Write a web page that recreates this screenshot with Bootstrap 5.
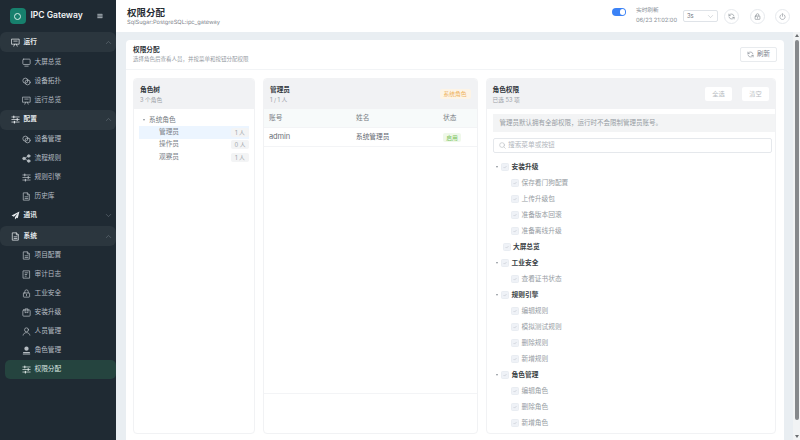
<!DOCTYPE html>
<html lang="zh-CN">
<head>
    <meta charset="UTF-8">
    <meta name="viewport" content="width=device-width, initial-scale=1.0">
    <title>IPC Gateway - 权限分配</title>
    <link href="https://cdn.jsdelivr.net/npm/bootstrap@5.3.0/dist/css/bootstrap.min.css" rel="stylesheet">
    <style>
        html, body { height: 440px; overflow: hidden; }
        body {
            font-family: "Inter", "Noto Sans CJK SC", sans-serif;
            font-size: 6.7px;
            line-height: 1.3;
            color: #5f6670;
            background: #e9eef2;
        }
        svg.ico { width: 9px; height: 9px; fill: none; stroke: currentColor; stroke-width: 1.3; stroke-linecap: round; stroke-linejoin: round; flex: none; }
        svg.solid { fill: currentColor; stroke: none; }

        /* 侧边栏 */
        .side-box { width: 116px; height: 440px; background: #1f2a33; color: #c3cad0; flex: none; }
        .brand-row { height: 32px; padding-left: 9.5px; flex: none; }
        .brand-logo { width: 16px; height: 16px; border-radius: 4px; background: #17806d; }
        .brand-logo i { display: block; width: 7px; height: 7px; border: 1.5px solid #d7efe9; border-radius: 50%; }
        .brand-name { font-size: 8.5px; font-weight: 600; color: #f2f4f6; margin-left: 5px; white-space: nowrap; }
        .menu-toggle { margin-left: 14px; color: #aab2b9; }
        svg.ico.menu-toggle { width: 6px; height: 6px; }
        .group-row { height: 20px; padding: 0 4px 0 11px; gap: 3.5px; color: #e6eaed; font-weight: 700; flex: none; }
        .group-row.opened { background: #2b363e; border-radius: 6px; }
        .group-row .arrow { margin-left: auto; width: 7px; height: 7px; color: #6a757d; }
        .menu-row { height: 19px; padding-left: 22px; gap: 3.5px; color: #b6bdc3; flex: none; }
        .menu-row.current { background: #25443f; color: #dbe6e3; border-radius: 5px; margin: 0 0 0 5px; padding-left: 17px; height: 18.5px; }
        .menu-first { margin-top: .5px; }

        /* 顶栏 */
        .top-box { height: 32px; background: #fff; padding: 0 10px 0 11px; flex: none; }
        .page-title { font-size: 9.5px; font-weight: 700; color: #272c33; line-height: 13px; }
        .page-sub { font-size: 5.7px; color: #7f868e; line-height: 8px; text-rendering: geometricPrecision; }
        .live-switch { width: 14px; height: 7.5px; background: #3b82f6; border-radius: 4px; position: relative; margin-bottom: 8px; }
        .live-switch::after { content: ""; position: absolute; top: 1px; right: 1px; width: 5.5px; height: 5.5px; background: #fff; border-radius: 50%; }
        .live-text { font-size: 5.7px; color: #858c94; line-height: 10px; margin: 0 10px; width: 37px; white-space: nowrap; text-rendering: geometricPrecision; }
        .rate-select { width: 35px; height: 12px; border: 1px solid #dfe3e8; border-radius: 2px; padding: 0 3px; font-size: 5.8px; color: #6d747c; margin-right: 6px; }
        .rate-select svg { width: 7px; height: 7px; color: #a6acb3; stroke-width: 1; }
        .round-btn { width: 15px; height: 15px; border: 1px solid #e6e9ed; border-radius: 50%; color: #7c838b; }
        .round-btn + .round-btn { margin-left: 10.5px; }
        .round-btn svg { width: 7px; height: 7px; }

        /* 内容 */
        .main-wrap { min-width: 0; }
        .content-box { padding: 8px 9px 0 10px; min-width: 0; }
        .outer-card { background: #fff; border-radius: 4px 4px 0 0; height: 400px; }
        .outer-head { height: 30px; padding: 0 7px; border-bottom: 1px solid #f2f4f6; flex: none; }
        .head-title { font-size: 6.7px; font-weight: 700; color: #30353b; line-height: 9px; }
        .head-sub { font-size: 5.5px; color: #959ba3; line-height: 8px; }
        .refresh-btn { width: 37px; height: 15px; border: 1px solid #e8ebee; border-radius: 2px; gap: 3px; font-size: 6.5px; color: #7b828a; }
        .refresh-btn svg { width: 7px; height: 7px; }
        .panel-row { padding: 8px 8px 6px 7px; gap: 8px; height: 370px; flex: none; }
        .panel-box { border: 1px solid #f1f2f4; border-radius: 4px; min-width: 0; overflow: hidden; }
        .panel-left { width: 122px; flex: none; }
        .panel-mid { width: 214.5px; flex: none; }
        .panel-right { flex: 1; }
        .panel-head { height: 30px; background: #f1f2f4; padding: 0 6px; flex: none; }
        .panel-title { font-size: 6.7px; font-weight: 700; color: #33383e; line-height: 10px; }
        .panel-sub { font-size: 5.7px; color: #9a9fa6; line-height: 9px; }

        .role-tree { padding: 5px 5px; }
        .role-top { height: 12.3px; padding-left: 4px; gap: 4px; color: #737a82; }
        .caret-down { width: 0; height: 0; border-left: 1.7px solid transparent; border-right: 1.7px solid transparent; border-top: 2.2px solid #8b9198; flex: none; }
        .role-item { height: 12.3px; padding: 0 0 0 20px; color: #7b8188; }
        .role-item.picked { background: #ecf5ff; }
        .count-tag { margin-left: auto; width: 18px; height: 9px; background: #f3f4f5; border-radius: 2px; font-size: 5.8px; color: #a0a5ab; text-align: center; line-height: 9px; }

        .grid-row { height: 19px; padding-left: 5px; border-bottom: 1px solid #f3f4f6; flex: none; }
        .grid-row.head-line { background: #f7fafa; color: #777e85; }
        .cell-a { width: 87px; }
        .cell-name { font-size: 7.5px; letter-spacing: -.1px; color: #6a7077; }
        .cell-b { width: 87px; }
        .tag-warn { background: #fdf4e6; color: #eeb35f; font-size: 5.8px; border-radius: 2px; width: 31px; height: 10px; line-height: 10px; text-align: center; }
        .tag-ok { display: block; background: #eff8ea; color: #79c257; font-size: 5.8px; border-radius: 2px; width: 18px; height: 9px; line-height: 9px; text-align: center; }
        .grid-foot { margin-top: auto; height: 40px; border-top: 1px solid #f3f4f6; flex: none; }

        .ghost-btn { width: 27px; height: 14px; background: #fff; border-radius: 2px; font-size: 6.2px; color: #b6bbc1; text-align: center; line-height: 14px; margin-left: 10px; }
        .perm-body { padding: 5px 0 0 6px; }
        .perm-note { height: 18px; background: #f3f4f5; font-size: 6.5px; color: #969ca3; padding-left: 7px; margin-bottom: 6px; }
        .perm-search { width: 279px; height: 15px; border: 1px solid #e5e8ec; border-radius: 2px; padding: 0 5px; gap: 2.5px; color: #b3b8be; margin-bottom: 6px; }
        .perm-search svg { width: 7px; height: 7px; }
        .perm-search input { border: 0; outline: 0; padding: 0; width: 200px; font-size: 6.7px; background: none; }
        .perm-search input::placeholder { color: #b3b8be; }
        .perm-line { height: 16px; color: #969ca3; gap: 3px; padding-left: 18px; }
        .perm-line.top-level { color: #3a3f45; font-weight: 700; padding-left: 10px; gap: 2.5px; }
        .perm-line .caret-down { margin-left: -7px; margin-right: 1.1px; }
        .perm-line input.form-check-input {
            width: 8px; height: 8px; margin: 0; flex: none; opacity: 1;
            border: 1px solid #e9edf2; border-radius: 1.5px; background-color: #eff2f7;
            background-image: url("data:image/svg+xml,%3csvg xmlns='http://www.w3.org/2000/svg' viewBox='0 0 20 20'%3e%3cpath fill='none' stroke='%23bfc5cc' stroke-width='2' d='M5 10l3.500 3.500L15 7'/%3e%3c/svg%3e");
        }

        /* 滚动条 */
        .scroll-col { width: 7px; background: #f1f3f4; flex: none; }
        .scroll-thumb { width: 4px; height: 380px; background: #85888b; border-radius: 2px; margin: 3px auto 0; }
        .scroll-arrow { width: 0; height: 0; margin: 0 auto; border-left: 2.5px solid transparent; border-right: 2.5px solid transparent; }
        .scroll-arrow.up { border-bottom: 3px solid #6a6d70; margin-top: 2px; }
        .scroll-arrow.down { border-top: 3px solid #6a6d70; margin-top: auto; margin-bottom: 2px; }
    </style>
</head>
<body class="d-flex">
    <svg width="0" height="0" class="position-absolute">
        <symbol id="i-monitor" viewBox="0 0 16 16"><rect x="1.5" y="2" width="13" height="9.5" rx="1.5"/><path d="M5 14.5h6"/></symbol>
        <symbol id="i-link" viewBox="0 0 16 16"><circle cx="6" cy="6.5" r="4.5"/><circle cx="10" cy="9.5" r="4.5"/></symbol>
        <symbol id="i-board" viewBox="0 0 16 16"><path d="M1.5 2h13v9h-13zM5 5.500h6M5 14.500l1.500-3.500M11 14.500 9.500 11"/></symbol>
        <symbol id="i-sliders" viewBox="0 0 16 16"><path d="M1.500 3.500h13M1.500 8h13M1.500 12.500h13"/><path d="M5 2v3M11 6.500v3M6 11v3" stroke-width="2"/></symbol>
        <symbol id="i-share" viewBox="0 0 16 16"><circle cx="12" cy="3.500" r="2.300" fill="currentColor"/><circle cx="3.500" cy="8" r="2.300" fill="currentColor"/><circle cx="12" cy="12.500" r="2.300" fill="currentColor"/><path d="M12 3.500 3.500 8l8.500 4.500"/></symbol>
        <symbol id="i-doc" viewBox="0 0 16 16"><path d="M3 1.500h6.500l3.500 3.500v9.500H3zM9.500 1.500V5H13M5.500 8.500h5M5.500 11.500h5"/></symbol>
        <symbol id="i-log" viewBox="0 0 16 16"><path d="M2.500 1.500h11v13h-11zM5.500 5h5M5.500 8h3M5.500 11h2"/></symbol>
        <symbol id="i-lock" viewBox="0 0 16 16"><rect x="2.500" y="7" width="11" height="7.500" rx="1"/><path d="M5 7V4.500a3 3 0 0 1 6 0V7M8 9.500v2.500"/></symbol>
        <symbol id="i-box" viewBox="0 0 16 16"><rect x="1.500" y="3.500" width="13" height="11" rx="1.500"/><path d="M5.500 3.500V1.500h5v2M5.500 3.500v5l2.500-1 2.500 1v-5"/></symbol>
        <symbol id="i-user" viewBox="0 0 16 16"><circle cx="8" cy="5" r="3.500"/><path d="M2 14.500c.5-3 3-4.500 6-4.500s5.500 1.500 6 4.500"/></symbol>
        <symbol id="i-userfill" viewBox="0 0 16 16"><circle cx="8" cy="4.800" r="3.800"/><path d="M2 10.500h12v2H2zM1.500 13.500h13v1.500h-13z"/></symbol>
        <symbol id="i-send" viewBox="0 0 16 16"><path d="M15 1 1 8l4 2 7-6-5 7v4l3-3 2 1z"/></symbol>
        <symbol id="i-refresh" viewBox="0 0 16 16"><path d="M13.500 6.500A5.700 5.700 0 0 0 3.500 4.500L2 6M2.500 9.500a5.700 5.700 0 0 0 10 2L14 10"/><path d="M2 2.500V6h3.500M14 13.500V10h-3.500"/></symbol>
        <symbol id="i-power" viewBox="0 0 16 16"><path d="M5 3.500a6 6 0 1 0 6 0M8 1.500v6"/></symbol>
        <symbol id="i-search" viewBox="0 0 16 16"><circle cx="7" cy="7" r="5.500"/><path d="m11.500 11.500 3 3"/></symbol>
        <symbol id="i-up" viewBox="0 0 16 16"><path d="m3 10.500 5-5 5 5"/></symbol>
        <symbol id="i-down" viewBox="0 0 16 16"><path d="m3 5.500 5 5 5-5"/></symbol>
        <symbol id="i-menu" viewBox="0 0 16 16"><path d="M2 3h12v10H2z" fill="currentColor"/><path d="M2 6h12M2 9.500h12" stroke="#1f2a33"/></symbol>
    </svg>

    <!-- 侧边栏 -->
    <aside class="side-box d-flex flex-column">
        <div class="brand-row d-flex align-items-center">
            <div class="brand-logo d-flex align-items-center justify-content-center"><i></i></div>
            <span class="brand-name">IPC Gateway</span>
            <svg class="ico menu-toggle"><use href="#i-menu"/></svg>
        </div>
        <div class="group-row opened d-flex align-items-center"><svg class="ico"><use href="#i-board"/></svg>运行<svg class="ico arrow"><use href="#i-up"/></svg></div>
        <div class="menu-row menu-first d-flex align-items-center"><svg class="ico"><use href="#i-monitor"/></svg>大屏总览</div>
        <div class="menu-row d-flex align-items-center"><svg class="ico"><use href="#i-link"/></svg>设备拓扑</div>
        <div class="menu-row d-flex align-items-center"><svg class="ico"><use href="#i-board"/></svg>运行总览</div>
        <div class="group-row opened d-flex align-items-center"><svg class="ico"><use href="#i-sliders"/></svg>配置<svg class="ico arrow"><use href="#i-up"/></svg></div>
        <div class="menu-row d-flex align-items-center"><svg class="ico"><use href="#i-link"/></svg>设备管理</div>
        <div class="menu-row d-flex align-items-center"><svg class="ico"><use href="#i-share"/></svg>流程规则</div>
        <div class="menu-row d-flex align-items-center"><svg class="ico"><use href="#i-sliders"/></svg>规则引擎</div>
        <div class="menu-row d-flex align-items-center"><svg class="ico"><use href="#i-doc"/></svg>历史库</div>
        <div class="group-row d-flex align-items-center"><svg class="ico solid"><use href="#i-send"/></svg>通讯<svg class="ico arrow"><use href="#i-down"/></svg></div>
        <div class="group-row opened menu-first d-flex align-items-center"><svg class="ico"><use href="#i-doc"/></svg>系统<svg class="ico arrow"><use href="#i-up"/></svg></div>
        <div class="menu-row d-flex align-items-center"><svg class="ico"><use href="#i-doc"/></svg>项目配置</div>
        <div class="menu-row d-flex align-items-center"><svg class="ico"><use href="#i-log"/></svg>审计日志</div>
        <div class="menu-row d-flex align-items-center"><svg class="ico"><use href="#i-lock"/></svg>工业安全</div>
        <div class="menu-row d-flex align-items-center"><svg class="ico"><use href="#i-box"/></svg>安装升级</div>
        <div class="menu-row d-flex align-items-center"><svg class="ico"><use href="#i-user"/></svg>人员管理</div>
        <div class="menu-row d-flex align-items-center"><svg class="ico solid"><use href="#i-userfill"/></svg>角色管理</div>
        <div class="menu-row current d-flex align-items-center"><svg class="ico"><use href="#i-sliders"/></svg>权限分配</div>
    </aside>

    <div class="main-wrap flex-grow-1 d-flex flex-column">
        <!-- 顶栏 -->
        <header class="top-box d-flex align-items-center">
            <div class="me-auto">
                <div class="page-title">权限分配</div>
                <div class="page-sub">SqlSugar:PostgreSQL:ipc_gateway</div>
            </div>
            <div class="live-switch"></div>
            <div class="live-text"><div>实时刷新</div><div>06/23 21:02:00</div></div>
            <div class="rate-select d-flex align-items-center justify-content-between">3s<svg class="ico"><use href="#i-down"/></svg></div>
            <div class="round-btn d-flex align-items-center justify-content-center"><svg class="ico"><use href="#i-refresh"/></svg></div>
            <div class="round-btn d-flex align-items-center justify-content-center"><svg class="ico"><use href="#i-lock"/></svg></div>
            <div class="round-btn d-flex align-items-center justify-content-center"><svg class="ico"><use href="#i-power"/></svg></div>
        </header>

        <div class="flex-grow-1 d-flex">
            <main class="content-box flex-grow-1">
                <div class="outer-card d-flex flex-column">
                    <div class="outer-head d-flex align-items-center justify-content-between">
                        <div>
                            <div class="head-title">权限分配</div>
                            <div class="head-sub">选择角色后查看人员，并按菜单和按钮分配权限</div>
                        </div>
                        <div class="refresh-btn d-flex align-items-center justify-content-center"><svg class="ico"><use href="#i-refresh"/></svg>刷新</div>
                    </div>
                    <div class="panel-row d-flex">
                        <!-- 角色树 -->
                        <section class="panel-box panel-left d-flex flex-column">
                            <div class="panel-head d-flex flex-column justify-content-center">
                                <div class="panel-title">角色树</div>
                                <div class="panel-sub">3 个角色</div>
                            </div>
                            <div class="role-tree">
                                <div class="role-top d-flex align-items-center"><span class="caret-down"></span>系统角色</div>
                                <div class="role-item picked d-flex align-items-center">管理员<span class="count-tag">1 人</span></div>
                                <div class="role-item d-flex align-items-center">操作员<span class="count-tag">0 人</span></div>
                                <div class="role-item d-flex align-items-center">观察员<span class="count-tag">1 人</span></div>
                            </div>
                        </section>
                        <!-- 人员 -->
                        <section class="panel-box panel-mid d-flex flex-column">
                            <div class="panel-head d-flex align-items-center justify-content-between">
                                <div>
                                    <div class="panel-title">管理员</div>
                                    <div class="panel-sub">1 / 1 人</div>
                                </div>
                                <span class="tag-warn">系统角色</span>
                            </div>
                            <div class="grid-row head-line d-flex align-items-center"><div class="cell-a">账号</div><div class="cell-b">姓名</div><div>状态</div></div>
                            <div class="grid-row d-flex align-items-center"><div class="cell-a cell-name">admin</div><div class="cell-b">系统管理员</div><div><span class="tag-ok">启用</span></div></div>
                            <div class="grid-foot"></div>
                        </section>
                        <!-- 权限 -->
                        <section class="panel-box panel-right d-flex flex-column">
                            <div class="panel-head d-flex align-items-center justify-content-between">
                                <div>
                                    <div class="panel-title">角色权限</div>
                                    <div class="panel-sub">已选 53 项</div>
                                </div>
                                <div class="d-flex"><span class="ghost-btn">全选</span><span class="ghost-btn">清空</span></div>
                            </div>
                            <div class="perm-body">
                                <div class="perm-note d-flex align-items-center">管理员默认拥有全部权限，运行时不会限制管理员账号。</div>
                                <div class="perm-search d-flex align-items-center"><svg class="ico"><use href="#i-search"/></svg><input type="text" placeholder="搜索菜单或按钮"></div>
                                <div class="perm-line top-level d-flex align-items-center"><span class="caret-down"></span><input class="form-check-input" type="checkbox" checked disabled>安装升级</div>
                                <div class="perm-line d-flex align-items-center"><input class="form-check-input" type="checkbox" checked disabled>保存看门狗配置</div>
                                <div class="perm-line d-flex align-items-center"><input class="form-check-input" type="checkbox" checked disabled>上传升级包</div>
                                <div class="perm-line d-flex align-items-center"><input class="form-check-input" type="checkbox" checked disabled>准备版本回滚</div>
                                <div class="perm-line d-flex align-items-center"><input class="form-check-input" type="checkbox" checked disabled>准备离线升级</div>
                                <div class="perm-line top-level d-flex align-items-center"><input class="form-check-input" type="checkbox" checked disabled>大屏总览</div>
                                <div class="perm-line top-level d-flex align-items-center"><span class="caret-down"></span><input class="form-check-input" type="checkbox" checked disabled>工业安全</div>
                                <div class="perm-line d-flex align-items-center"><input class="form-check-input" type="checkbox" checked disabled>查看证书状态</div>
                                <div class="perm-line top-level d-flex align-items-center"><span class="caret-down"></span><input class="form-check-input" type="checkbox" checked disabled>规则引擎</div>
                                <div class="perm-line d-flex align-items-center"><input class="form-check-input" type="checkbox" checked disabled>编辑规则</div>
                                <div class="perm-line d-flex align-items-center"><input class="form-check-input" type="checkbox" checked disabled>模拟测试规则</div>
                                <div class="perm-line d-flex align-items-center"><input class="form-check-input" type="checkbox" checked disabled>删除规则</div>
                                <div class="perm-line d-flex align-items-center"><input class="form-check-input" type="checkbox" checked disabled>新增规则</div>
                                <div class="perm-line top-level d-flex align-items-center"><span class="caret-down"></span><input class="form-check-input" type="checkbox" checked disabled>角色管理</div>
                                <div class="perm-line d-flex align-items-center"><input class="form-check-input" type="checkbox" checked disabled>编辑角色</div>
                                <div class="perm-line d-flex align-items-center"><input class="form-check-input" type="checkbox" checked disabled>删除角色</div>
                                <div class="perm-line d-flex align-items-center"><input class="form-check-input" type="checkbox" checked disabled>新增角色</div>
                            </div>
                        </section>
                    </div>
                </div>
            </main>
            <div class="scroll-col d-flex flex-column">
                <div class="scroll-arrow up"></div>
                <div class="scroll-thumb"></div>
                <div class="scroll-arrow down"></div>
            </div>
        </div>
    </div>
    <script src="https://cdn.jsdelivr.net/npm/bootstrap@5.3.0/dist/js/bootstrap.bundle.min.js"></script>
</body>
</html>
